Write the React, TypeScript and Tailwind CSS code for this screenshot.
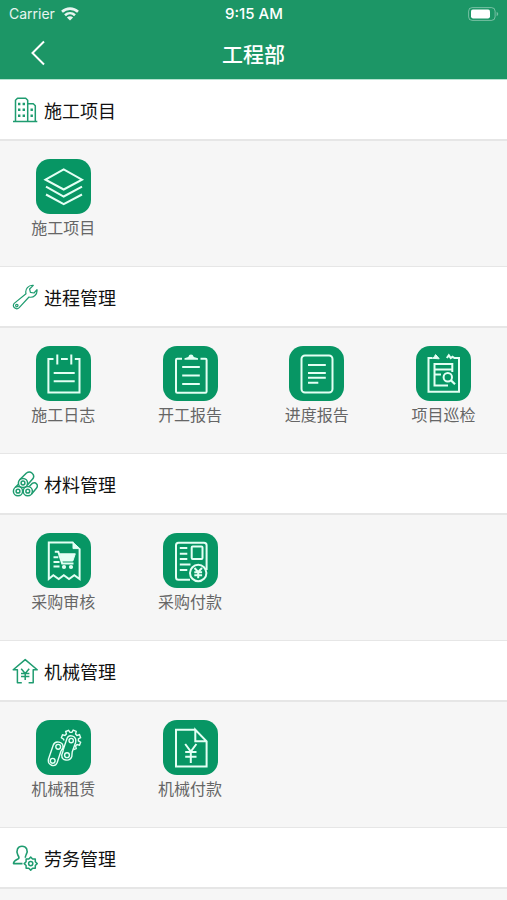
import type { ReactNode } from "react";

type Item = { label: string; icon: ReactNode };
type Section = { title: string; icon: ReactNode; items: Item[] };

const sections: Section[] = [
  {
    title: "施工项目",
    icon: (
      <>
        <path d="M3.5 24.5V3.2L5.5 1.2H13.7L15.7 3.2V24.5M15.7 6.7H21.3L23.3 8.7V24.5M1 24.6H25.3" />
        <path strokeWidth="2.4" d="M6 7H8.4M10.6 7H13M6 12.8H8.4M10.6 12.8H13M6 18.8H8.4M10.6 18.8H13M18.5 12.8H20.9M18.5 18.8H20.9" />
      </>
    ),
    items: [
      {
        label: "施工项目",
        icon: (
          <path d="M9.5 20.7L27.7 10.5L46 20.7L27.7 30.5ZM10 27.7L27.7 37.5L46 27.7M10 35.5L27.7 45.2L46 35.5" />
        ),
      },
    ],
  },
  {
    title: "进程管理",
    icon: (
      <>
        <path strokeWidth="1.2" d="M14 9.8C12.8 5 16.5 .8 21.3 1.3L17.6 5L18.4 8.4L22 9L25 5.6C25.6 10.4 21.6 14.2 17 13L7.2 23.6C4.2 26.6-.6 22.6 2.2 19.4Z" />
        <circle strokeWidth="1.2" cx="4.8" cy="21.6" r="1.2" />
      </>
    ),
    items: [
      {
        label: "施工日志",
        icon: (
          <path d="M17.5 13H12.4V46.5H43.5V13H38.8M25 13H31.8M21.3 8.5V18.5M35.3 8.5V18.5M17.7 27H38.7M17.7 35.3H38.7" />
        ),
      },
      {
        label: "开工报告",
        icon: (
          <>
            <path d="M19 12.7H14.2Q13 12.7 13 14V45.6Q13 46.8 14.2 46.8H42.4Q43.6 46.8 43.6 45.6V14Q43.6 12.7 42.4 12.7H37.5M19.2 21H36.8M19.2 29.4H36.8M19.2 38H36.8" />
            <path fill="currentColor" stroke="none" d="M21.5 13.8V12.2L25.3 11Q26 8.6 28 8.6Q30 8.6 30.8 11L35 12.2V13.8Z" />
          </>
        ),
      },
      {
        label: "进度报告",
        icon: (
          <>
            <rect x="12.5" y="9.5" width="31" height="37" rx="3.5" />
            <path d="M19 19H36.8M19 27H36.8M19 31.8H36.8M19 36.7H29.3" />
          </>
        ),
      },
      {
        label: "项目巡检",
        icon: (
          <>
            <path d="M16.5 12H12.5V45.7H43V12H38.5L36.5 10.8L34.8 12L32.8 9.3L30.8 12" />
            <path fill="currentColor" strokeWidth="1" d="M16.5 12.3L18.5 10.5L19.5 8.6L21.5 10.5L23.2 12.8Z" />
            <path d="M36.3 26V18H18.5V39.4H32M18.5 23.4H36.3M18.5 28.5H25" />
            <circle cx="31.8" cy="31.2" r="4.2" />
            <path d="M35 34.4L39 38.2" strokeWidth="2.2" />
          </>
        ),
      },
    ],
  },
  {
    title: "材料管理",
    icon: (
      <>
        <circle cx="6" cy="20.2" r="4.6" />
        <circle cx="6" cy="20.2" r="1.9" />
        <circle cx="15.8" cy="20.2" r="4.6" />
        <circle cx="15.8" cy="20.2" r="1.9" />
        <circle cx="11" cy="12" r="4.6" />
        <circle cx="11" cy="12" r="1.9" />
        <path d="M7.4 9L14.5 2C18.5-.7 23.4 3.4 21 7.6L15.2 14.2M17.2 15.6L20.2 12.4C23.8 10.4 27 14.2 24.4 17.2L19.4 23.2M3.2 16.5L6.4 13.2" />
      </>
    ),
    items: [
      {
        label: "采购审核",
        icon: (
          <>
            <path d="M37.3 9.5H12.8V46L17.3 42.3L22.7 46L27.8 42.3L33 46L38.3 42.3L43.6 46V15.5" />
            <path fill="currentColor" strokeWidth="1" d="M37 9.3L43.8 15.6H37Z" />
            <path d="M18.8 18.8H22.3L26.2 30.5H37.5M17.5 24.3H22.3M17.5 29H23.5M17.5 33.5H23.5" />
            <path fill="currentColor" strokeWidth="1" d="M23.8 20.8H39.3L36.8 28H26Z" />
            <circle cx="28" cy="34" r="2.1" fill="currentColor" stroke="none" />
            <circle cx="35" cy="34" r="2.1" fill="currentColor" stroke="none" />
          </>
        ),
      },
      {
        label: "采购付款",
        icon: (
          <>
            <path d="M27 46.8H15.5Q13 46.8 13 44.3V12.2Q13 9.7 15.5 9.7H41Q43.6 9.7 43.6 12.2V37M16.8 15H24.3M16.8 20.7H24.3M16.8 26H24.3M16.8 31.4H27.5M16.8 37H24.3" />
            <rect x="28.7" y="13.4" width="10.8" height="12.6" rx="1" />
            <circle cx="35.2" cy="40" r="8.2" />
            <path d="M31.5 35L35.2 39L39 35M35.2 39V45.2M31.3 39.3H39.1M31.3 42.2H39.1" />
          </>
        ),
      },
    ],
  },
  {
    title: "机械管理",
    icon: (
      <path d="M9.8 24.8H5.4V11.8H1.2L13.2 1.6L25.2 11.8H21.2V24.8H16.6M9.2 10.8L13.2 15.4L17.2 10.8M13.2 15.4V22M9 15.4H17.4M9 18.6H17.4" />
    ),
    items: [
      {
        label: "机械租赁",
        icon: (
          <g strokeWidth="1.4">
            <circle cx="16.7" cy="40.8" r="2.4" />
            <circle cx="22.2" cy="26.8" r="2.4" />
            <circle cx="31" cy="35.2" r="2.4" />
            <circle cx="35.2" cy="20.6" r="2.2" />
            <path d="M12.5 39L17.2 25.2C19 20 27.5 21.5 27 27.5L24.8 31.5L21.2 42.5C19 48 11.2 45.5 12.5 39ZM27.2 30.5L25.8 34.8C25.3 41 34 42 35.8 36.5L36.2 32L39.6 22.5C41 15.5 33 13.8 31 18.5L28.6 25.5L27 30.5" />
            <path d="M28 20.5L27.6 19.1L25.4 17.8L26.5 14.8L29 15.5L30.4 14.1L29.7 11.5L32.6 10.3L34 12.4L35.9 12.4L37.2 10.1L40.2 11.4L39.6 14L40.9 15.4L43.5 14.7L44.6 17.6L42.4 19L42.4 20.9L44.6 22.2L43.5 25.2L41 24.5L39.6 25.9L40.2 28.5L37.6 29.6" />
          </g>
        ),
      },
      {
        label: "机械付款",
        icon: (
          <path d="M32.3 9.7H13V46.5H43.6V21.3L32.3 9.7V21.3H43.6M22.2 24L27.8 31.5L33.4 24M27.8 31.5V43M22.2 32H33.5M22.2 36.8H33.5" />
        ),
      },
    ],
  },
  {
    title: "劳务管理",
    icon: (
      <>
        <path strokeWidth="1.6" d="M10.5 18.6H1.5C1.5 15.6 4.5 15 6.5 13.7C7.6 12.8 6.8 11.5 5.8 10C3.8 5.5 5.7 1.3 10 1.3C14.6 1.3 16.4 5.5 14.2 9.5C13.2 11.5 13 12 13.6 12.8" />
        <circle cx="18.7" cy="18.6" r="2.1" />
        <path d="M18.7 12.1L20.6 14L23.3 14L23.3 16.7L25.2 18.6L23.3 20.5L23.3 23.2L20.6 23.2L18.7 25.1L16.8 23.2L14.1 23.2L14.1 20.5L12.2 18.6L14.1 16.7L14.1 14L16.8 14Z" />
      </>
    ),
    items: [],
  },
];

const StatusBar = () => (
  <div className="grid h-7 grid-cols-3 items-center pl-[9px] pr-2 font-[Inter,sans-serif] text-[14px] leading-5">
    <div className="flex items-center gap-[6px] text-white/90">
      <span>Carrier</span>
      <svg className="h-[14px] w-[18px]" viewBox="0 0 18 14" fill="none" stroke="currentColor" strokeWidth="2.6">
        <path d="M1 4.8C5.5.6 12.5.6 17 4.8M4 8.3C6.9 5.6 11.1 5.6 14 8.3" />
        <path fill="currentColor" stroke="none" d="M9 13.6L5.9 10.5C7.6 8.9 10.4 8.9 12.1 10.5Z" />
      </svg>
    </div>
    <span className="text-center text-[15px] font-medium">9:15 AM</span>
    <svg className="h-[14px] w-[31px] justify-self-end" viewBox="0 0 31 14" fill="none">
      <rect x=".6" y=".6" width="26.5" height="12.8" rx="3.6" stroke="white" strokeOpacity=".4" />
      <rect x="3" y="2.6" width="19" height="8.8" rx="1.8" fill="white" />
      <path d="M28.6 4.8C30.8 5.8 30.8 8.2 28.6 9.2Z" fill="white" fillOpacity=".4" />
    </svg>
  </div>
);

const App = () => {
  return (
    <div className="flex min-h-screen flex-col bg-[#f6f6f6] font-['Noto_Sans_CJK_SC',sans-serif]">
      <header className="h-20 border-b border-[#b5e3d0] bg-[#1c9666] text-white">
        <StatusBar />
        <div className="grid h-[50px] grid-cols-[64px_1fr_64px] items-center">
          <button type="button" aria-label="返回" className="flex h-full items-center justify-end pr-[18px]">
            <svg className="h-[26px] w-4" viewBox="0 0 16 26" fill="none" stroke="currentColor" strokeWidth="2">
              <path d="M14 1.5L2.5 13L14 24.5" />
            </svg>
          </button>
          <h1 className="text-center text-[21px] font-medium leading-6">工程部</h1>
        </div>
      </header>

      <main className="flex flex-1 flex-col">
        {sections.map((section) => (
          <section key={section.title}>
            <div className="flex h-[61px] items-center gap-[6px] border-b-2 border-[#e6e6e6] bg-white pl-3">
              <svg className="size-[26px] text-[#1f9c70]" viewBox="0 0 26 26" fill="none" stroke="currentColor" strokeWidth="1.5" strokeLinejoin="round">
                {section.icon}
              </svg>
              <h2 className="text-[18px] leading-6 text-[#111]">{section.title}</h2>
            </div>
            {section.items.length > 0 && (
              <div className="grid h-[126px] grid-cols-4 items-start border-b border-[#e6e6e6] pt-[18px]">
                {section.items.map((item) => (
                  <a key={item.label} href="#" className="flex flex-col items-center gap-px">
                    <span className="size-[55px] rounded-[14px] bg-[#079664] text-[#e4fff4]">
                      <svg className="size-full" viewBox="0 0 55 55" fill="none" stroke="currentColor" strokeWidth="2">
                        {item.icon}
                      </svg>
                    </span>
                    <span className="text-[16px] leading-6 text-[#666]">{item.label}</span>
                  </a>
                ))}
              </div>
            )}
          </section>
        ))}
      </main>
    </div>
  );
};

export default App;
